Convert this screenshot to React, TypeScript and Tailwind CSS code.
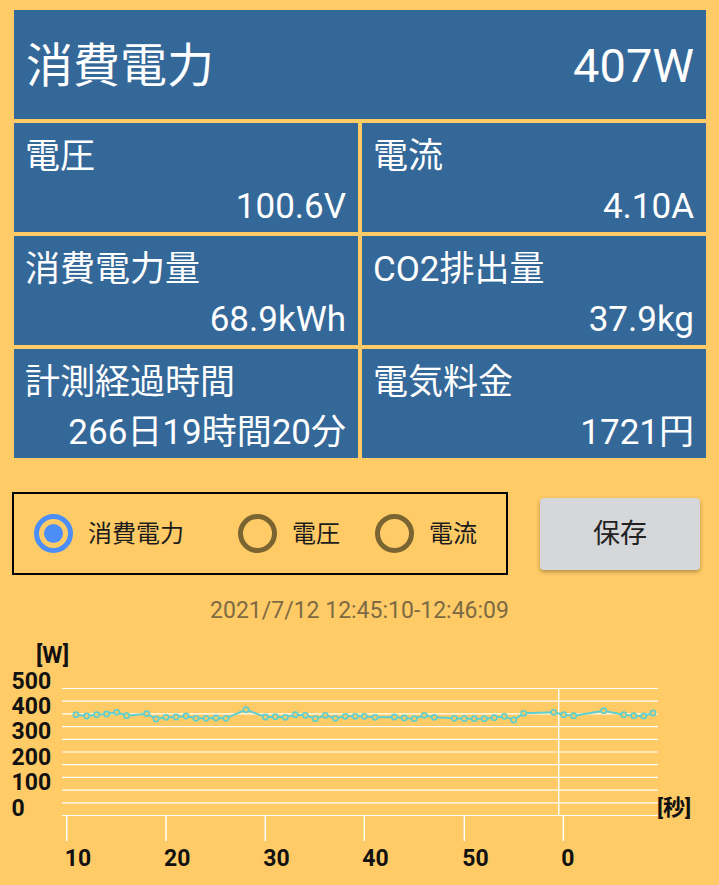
import React from "react";

const CELLS = [
    [
        { label: "電圧", value: "100.6V" },
        { label: "電流", value: "4.10A" },
    ],
    [
        { label: "消費電力量", value: "68.9kWh" },
        { label: "CO2排出量", value: "37.9kg" },
    ],
    [
        { label: "計測経過時間", value: "266日19時間20分" },
        { label: "電気料金", value: "1721円" },
    ],
];

// chart coordinates are page pixels minus 640 (top of the chart block)
const POINTS: [number, number][] = [
    [76, 714.7], [86.7, 716], [96.7, 714.7], [106.7, 714], [116.7, 712.3], [126.7, 715.7],
    [146.7, 713.7], [156, 719], [166, 717.3], [176, 717], [186, 716], [196, 718.3],
    [206, 718.3], [216, 718], [226, 718.3], [246, 709.7], [265.3, 717], [275.3, 716.7],
    [285.3, 717.3], [295.3, 714.7], [305.3, 715.3], [315.3, 718.7], [325.3, 715.3],
    [335.3, 718.3], [345.3, 716.3], [355.3, 716.3], [364.3, 716.3], [375, 717.3],
    [394.3, 717], [404.3, 718], [414.3, 718.7], [424.3, 715.3], [434.3, 717.3],
    [454.3, 718.3], [464.3, 718.7], [474.3, 718.7], [484.3, 718.7], [494.3, 717.7],
    [504.3, 716.3], [513.7, 720], [523.7, 713.3], [553.7, 712.3], [563.7, 714.7],
    [573.7, 715.7], [603.7, 710.7], [623.7, 714.7], [633.7, 715.7], [643.7, 716], [653, 713],
];

const GRID_TOP = 48.5;
const GRID_STEP = 12.7;
const X_TICKS = [
    { x: 66.7, label: "10" },
    { x: 166, label: "20" },
    { x: 265.3, label: "30" },
    { x: 364.3, label: "40" },
    { x: 464.3, label: "50" },
    { x: 563.3, label: "0" },
];

function Chart() {
    const pts = POINTS.map(([x, y]) => [x, y - 640] as [number, number]);
    return (
        <svg width="719" height="245" viewBox="0 0 719 245" className="block">
            <g fontFamily="Roboto, 'Noto Sans CJK JP', sans-serif" fontWeight="700" fill="#111">
                <text x="36" y="23" fontSize="23">[W]</text>
                {["500", "400", "300", "200", "100", "0"].map((t, i) => (
                    <text key={t} x="11.5" y={GRID_TOP + i * GRID_STEP * 2} fontSize="23">{t}</text>
                ))}
                <text x="657" y="175" fontSize="22">[秒]</text>
                {X_TICKS.map(t => (
                    <text key={t.label} x={t.x - 2} y="226" fontSize="23">{t.label}</text>
                ))}
            </g>
            {Array.from({ length: 11 }, (_, i) => (
                <line key={i} x1="62" x2="658" y1={GRID_TOP + i * GRID_STEP} y2={GRID_TOP + i * GRID_STEP} stroke="#fff" strokeWidth="1.2" />
            ))}
            <line x1="558.7" x2="558.7" y1={GRID_TOP} y2={GRID_TOP + 10 * GRID_STEP} stroke="#fff" strokeWidth="1.4" />
            {X_TICKS.map(t => (
                <line key={t.label} x1={t.x} x2={t.x} y1="176" y2="201" stroke="#fff" strokeWidth="1.5" />
            ))}
            <polyline points={pts.map(p => p.join(",")).join(" ")} fill="none" stroke="#5ecfcf" strokeWidth="2" />
            {pts.map(([x, y], i) => (
                <circle key={i} cx={x} cy={y} r="2.6" fill="#ffcb66" stroke="#5ecfcf" strokeWidth="1.6" />
            ))}
        </svg>
    );
}

function Radio({ label, checked, className }: { label: string; checked?: boolean; className?: string }) {
    return (
        <div className={`flex items-center gap-[15px] ${className ?? ""}`}>
            <div className={`w-[39px] h-[39px] rounded-full border-[5px] flex items-center justify-center shrink-0 ${checked ? "border-[#4b8ef7]" : "border-[#7a6431]"}`}>
                {checked && <div className="w-[19px] h-[19px] rounded-full bg-[#4b8ef7]" />}
            </div>
            <span className="text-[24px] leading-none text-[#1c1c1c]">{label}</span>
        </div>
    );
}

export default function App() {
    return (
        <div className="w-full h-[885px] bg-[#ffcb66] overflow-hidden font-[Roboto,'Noto_Sans_CJK_JP',sans-serif]">
            {/* Readout panels */}
            <div className="pt-[10px] pl-[14px] pr-[13px] flex flex-col gap-[4px]">
                <div className="h-[109px] bg-[#346899] flex items-center justify-between pl-[12px] pr-[12px] pt-[2px] text-white text-[47px] leading-none">
                    <span>消費電力</span>
                    <span>407W</span>
                </div>
                {CELLS.map((row, i) => (
                    <div key={i} className="grid grid-cols-2 gap-[4px]">
                        {row.map(cell => (
                            <div key={cell.label} className="h-[109px] bg-[#346899] flex flex-col justify-between pt-[16px] pb-[8px] pl-[11px] pr-[12px] text-white text-[35px] leading-none">
                                <span>{cell.label}</span>
                                <span className="text-right">{cell.value}</span>
                            </div>
                        ))}
                    </div>
                ))}
            </div>

            {/* Graph selector + save */}
            <div className="flex items-start pl-[12px] mt-[34px]">
                <div className="w-[496px] h-[83px] border-2 border-black flex items-center pl-[20px]">
                    <Radio label="消費電力" checked className="w-[204px]" />
                    <Radio label="電圧" className="w-[137px]" />
                    <Radio label="電流" />
                </div>
                <button type="button" className="ml-[32px] mt-[6px] w-[160px] h-[72px] rounded-[4px] bg-[#d6d7d8] shadow-[0_2px_4px_rgba(0,0,0,0.3)] text-[27px] text-[#222]">
                    保存
                </button>
            </div>

            <div className="h-[65px] pt-[24px] text-center text-[23px] leading-[23px] text-[#7d6a45]">
                2021/7/12 12:45:10-12:46:09
            </div>

            <Chart />
        </div>
    );
}
